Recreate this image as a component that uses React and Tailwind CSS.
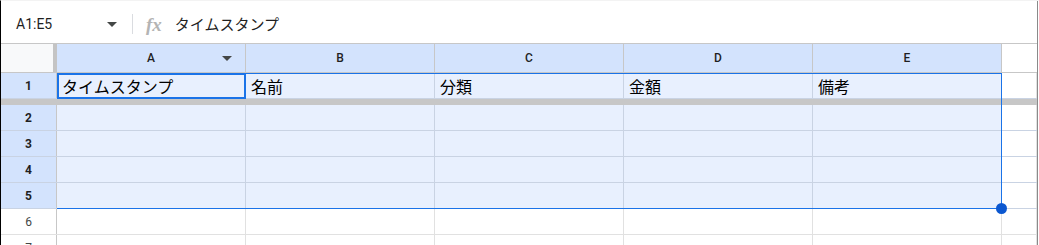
const COLS = ['A', 'B', 'C', 'D', 'E'];
const HEADERS = ['タイムスタンプ', '名前', '分類', '金額', '備考'];
const UI_FONT = "font-['Roboto','Liberation_Sans',sans-serif]";
const JP_FONT = "font-['Noto_Sans_CJK_JP','Noto_Sans',sans-serif]";

function Caret({ className = '' }) {
  return (
    <svg width="10" height="5" viewBox="0 0 10 5" className={className}>
      <path d="M0 0h10L5 5z" fill="#444746" />
    </svg>
  );
}

function FormulaBar() {
  return (
    <div className="flex h-[43px] items-center border-b border-[#c7c7c7] bg-white pt-[4px]">
      <div className={`flex w-[131px] items-center pl-[15px] pr-[15px] text-[14px] text-[#1f1f1f] ${UI_FONT}`}>
        <span className="flex-1">A1:E5</span>
        <Caret className="mt-[1px]" />
      </div>
      <div className="h-[20px] w-px bg-[#dadce0]" />
      <span className="ml-[13px] font-['Liberation_Serif',serif] text-[19px] font-bold italic leading-none text-[#b4b4b4]">
        fx
      </span>
      <span className={`ml-[13px] text-[15px] text-[#1f1f1f] ${JP_FONT}`}>タイムスタンプ</span>
    </div>
  );
}

function RowHeader({ n, selected }) {
  return (
    <div
      className={`flex h-[25px] w-[56px] shrink-0 items-center justify-center border-r border-[#c7c7c7] text-[12px] ${UI_FONT} ${
        selected ? 'bg-[#d3e3fd] font-bold text-[#1f1f1f]' : 'bg-white text-[#444746]'
      }`}
    >
      {n}
    </div>
  );
}

function DataRow({ n, selected, values }) {
  const line = selected ? 'border-[#c9d3e3]' : 'border-[#e1e1e1]';
  return (
    <div className={`flex h-[26px] border-b ${line}`}>
      <RowHeader n={n} selected={selected} />
      {COLS.map((c, i) => (
        <div
          key={c}
          className={`flex h-[25px] w-[189px] shrink-0 items-center border-r pl-[5px] text-[16px] text-black ${JP_FONT} ${line} ${
            selected ? 'bg-[#e8f0fe]' : 'bg-white'
          }`}
        >
          {values ? values[i] : ''}
        </div>
      ))}
      <div className="h-[25px] w-[35px] shrink-0 border-r border-[#e1e1e1] bg-white" />
    </div>
  );
}

export default function App() {
  return (
    <div className="relative h-[245px] w-[1039px] overflow-hidden border-l border-t border-l-black border-t-[#f3f3f3] bg-white">
      <div className="h-full w-[1037px] border-r border-[#8a8a8a]">
        <FormulaBar />

        {/* column headers */}
        <div className="flex h-[29px] border-b border-[#c7c7c7]">
          <div className="w-[56px] shrink-0 border-r-[4px] border-[#c4c4c4] bg-[#f8f9fa]" />
          {COLS.map((c, i) => (
            <div
              key={c}
              className={`relative flex w-[189px] shrink-0 items-center justify-center border-r border-[#c7c7c7] bg-[#d3e3fd] text-[12px] font-medium text-[#1f1f1f] ${UI_FONT}`}
            >
              {c}
              {i === 0 && <Caret className="absolute right-[13px] top-[12px]" />}
            </div>
          ))}
          <div className="w-[35px] shrink-0 bg-white" />
        </div>

        <DataRow n={1} selected values={HEADERS} />

        {/* frozen row divider */}
        <div className="h-[6px] bg-[#c7c7c7]" />

        {[2, 3, 4, 5].map((n) => (
          <DataRow key={n} n={n} selected />
        ))}
        <DataRow n={6} />
        <DataRow n={7} />
      </div>

      {/* selection range A1:E5 */}
      <div className="pointer-events-none absolute left-[56px] top-[72px] z-10 h-[136px] w-[945px] border border-l-0 border-[#1a73e8]" />
      {/* active cell */}
      <div className="pointer-events-none absolute left-[56px] top-[72px] z-10 h-[26px] w-[189px] border-2 border-[#1a73e8]" />
      {/* fill handle */}
      <div className="absolute left-[995px] top-[202px] z-20 h-[11px] w-[11px] rounded-full bg-[#0b57d0]" />
    </div>
  );
}
